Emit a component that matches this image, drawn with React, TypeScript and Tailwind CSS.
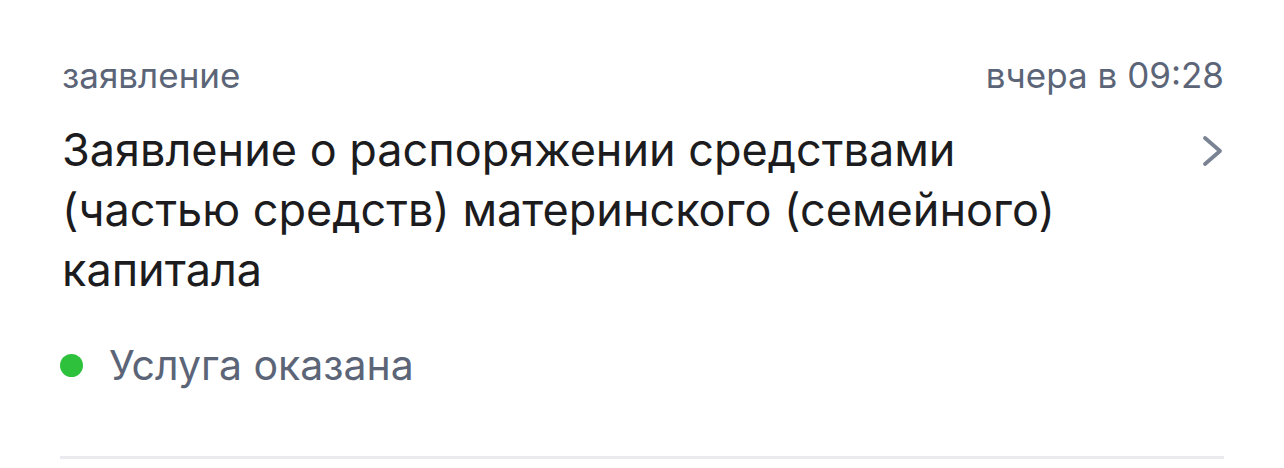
export default function App() {
  return (
    <div className="w-[1284px] h-[468px] bg-white overflow-hidden" style={{ fontFamily: "Inter, 'Noto Sans', sans-serif" }}>
      <div className="mx-[60px] pt-[54px]">
        {/* Header row */}
        <div className="flex items-center justify-between text-[35px] leading-[42px] text-[#5b6577]">
          <span className="pl-[2px]">заявление</span>
          <span>вчера в 09:28</span>
        </div>

        {/* Title + chevron */}
        <div className="mt-[24px] flex items-start justify-between">
          <h1 className="pl-[2px] text-[45px] leading-[60px] text-[#1c1c1e]">
            Заявление о распоряжении средствами
            <br />
            (частью средств) материнского (семейного)
            <br />
            капитала
          </h1>
          <svg width="24" height="34" viewBox="0 0 24 34" className="mt-[14px]" fill="none">
            <path d="M5 4 L20 17 L5 30" stroke="#7a8394" strokeWidth="3.8" strokeLinecap="round" strokeLinejoin="round" />
          </svg>
        </div>

        {/* Status */}
        <div className="mt-[40px] flex items-center gap-[26px]">
          <span className="w-[23px] h-[23px] rounded-full bg-[#2ec13c]" />
          <span className="text-[41px] leading-[50px] text-[#5b6577]">Услуга оказана</span>
        </div>

        <div className="mt-[66px] h-[3px] bg-[#ebebef]" />
      </div>
    </div>
  );
}
